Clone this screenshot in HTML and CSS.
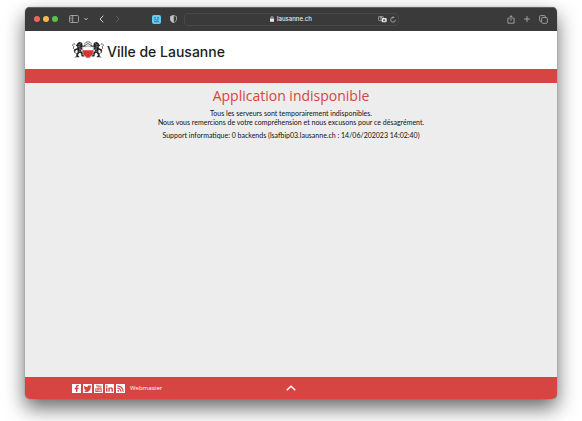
FILE: index.html
```html
<!DOCTYPE html>
<html lang="fr">
<head>
<meta charset="utf-8">
<meta name="viewport" content="width=device-width, initial-scale=1">
<title>Ville de Lausanne</title>
<link rel="stylesheet" href="styles.css">
</head>
<body>
<div class="window">
  <div class="toolbar">
    <div class="tools tools-left">
      <div class="lights"><span class="light red"></span><span class="light amber"></span><span class="light green"></span></div>
      <div class="group sidebar-group">
        <button class="tool" aria-label="Barre latérale"><svg width="10" height="8" viewBox="0 0 10 8"><rect x=".5" y=".5" width="9" height="7" rx="1.2"/><path d="M3.7.5v7M1.500 2.200h1M1.500 3.600h1M1.500 5h1"/></svg></button>
        <button class="tool" aria-label="Groupes d'onglets"><svg width="4" height="4" viewBox="0 0 4 4"><path class="strong" d="M.5 1.200 2 2.800l1.500-1.600"/></svg></button>
      </div>
      <div class="group history-group">
        <button class="tool" aria-label="Précédent"><svg width="5" height="8" viewBox="0 0 5 8"><path class="strong" d="M4.300.7 1 4l3.300 3.300"/></svg></button>
        <button class="tool dim" aria-label="Suivant"><svg width="5" height="8" viewBox="0 0 5 8"><path d="M.7.7 4 4 .7 7.300"/></svg></button>
      </div>
      <div class="group extension-group">
        <button class="tool" aria-label="Extension"><svg width="9" height="9" viewBox="0 0 9 9"><rect class="ext" width="9" height="9" rx="2"/><path class="ext-line" d="M2 2.800h2M5 2.800h2M2 6.700h5M2.200 5.200l1.500-.8 1.400.8 1.700-1.200"/></svg></button>
        <button class="tool" aria-label="Confidentialité"><svg width="7" height="8" viewBox="0 0 7 8"><path d="M3.500.5 6.500 1.500v2.700C6.500 5.800 5.200 7 3.500 7.600 1.800 7 .5 5.800.5 4.200V1.500z"/><path class="solid" d="M3.500.5v7.100C1.800 7 .5 5.800.5 4.200V1.500z"/></svg></button>
      </div>
    </div>
    <div class="address">
      <span class="host"><svg width="4" height="6" viewBox="0 0 4 6"><rect class="white" y="2.500" width="4" height="3.300" rx=".5"/><path class="white-line" d="M.9 2.700V1.700a1.100 1.100 0 0 1 2.200 0v1"/></svg>lausanne.ch</span>
      <span class="address-tools">
        <button class="tool" aria-label="Traduire"><svg width="9" height="7" viewBox="0 0 9 7"><rect x=".4" y=".4" width="5" height="4.200" rx="1"/><path d="M1.600 1.700h2.600M2.900 1v.7M2 3.400l1.700-1.600"/><rect class="white" x="3.700" y="2" width="5" height="4.300" rx="1"/><path class="cut" d="m5.200 5.300 1-2.300 1 2.300M5.500 4.600h1.400"/></svg></button>
        <button class="tool" aria-label="Recharger"><svg width="6" height="7" viewBox="0 0 6 7"><path d="M5.400 3.800A2.400 2.400 0 1 1 3 1.400h.8M2.800.3l1.100 1.100-1.100 1.100"/></svg></button>
      </span>
    </div>
    <div class="tools tools-right">
      <button class="tool" aria-label="Partager"><svg width="8" height="9" viewBox="0 0 8 9"><path d="M2.700 3.200H.9v5h6.200v-5H5.300M4 5.700V.7M2.500 2.200 4 .7l1.500 1.500"/></svg></button>
      <button class="tool" aria-label="Nouvel onglet"><svg width="8" height="8" viewBox="0 0 8 8"><path d="M4 1v6M1 4h6"/></svg></button>
      <button class="tool" aria-label="Onglets"><svg width="9" height="9" viewBox="0 0 9 9"><path d="M2.500 6.300h-1a.9.9 0 0 1-.9-.9V1.500a.9.9 0 0 1 .9-.9h3.900a.9.9 0 0 1 .9.9v1"/><rect x="2.600" y="2.600" width="5.700" height="5.700" rx=".9"/></svg></button>
    </div>
  </div>
  <header class="masthead">
    <a class="brand" href="#">
      <svg class="arms" width="32" height="18" viewBox="0 0 32 18" aria-hidden="true">
        <defs>
          <g id="lion">
            <path class="ink" d="M5.500 2.200 7 1l2.200.2 1.300 1.400-.3 1.600 1.600.5 1.300-1 .5 1-1.700 1.300-2.100-.1.200 2.200-1.100 2 1.900 1.300-.2 2.200 1.500 1.100v.8H9.600l-.5-3-1.600-.8-1.400 1.900.2 1.300 1 .6v.7H4.200l.1-2.700 1.400-2.600-.3-2.100-2 .7-.8 1.500-1-.8 1-1.900 2.600-1.200.1-1.700-1.500-.7z"/>
            <path class="tail" d="M5 12.500 2.500 11.500l1-2.200L1.300 7.500l.5-2L.4 4l1.400-1.400 1.500.8M2.700 16.600l1.800-1.200"/>
            <path class="mane" d="M6.500 3.300l1.700.9M6.300 5.500l2 .6M7 8l2 .2M6.800 10.200l1.700.2M8.200 2.200h1"/>
          </g>
        </defs>
        <use href="#lion"/>
        <use href="#lion" transform="translate(32 0) scale(-1 1)"/>
        <path class="crest" d="M12 3.300Q16-1.800 20 3.300M13.200 4Q16 1.200 18.800 4"/>
        <path class="shield" d="M10.700 5.200q2.800 1 5.300-.3Q18.500 6.200 21.300 5.200v5.600q0 4.400-5.300 6.200-5.300-1.800-5.300-6.200z"/>
        <path class="gules" d="M11 9.200h10v1.600q0 4.100-5 5.900-5-1.800-5-5.900z"/>
      </svg>
      <span class="brand-name">Ville de Lausanne</span>
    </a>
  </header>
  <div class="band"></div>
  <main class="content">
    <h1>Application indisponible</h1>
    <p>Tous les serveurs sont temporairement indisponibles.<br>Nous vous remercions de votre compréhension et nous excusons pour ce désagrément.</p>
    <p>Support informatique: 0 backends (lsafbip03.lausanne.ch : 14/06/202023 14:02:40)</p>
  </main>
  <footer class="footer">
    <nav class="social">
      <a href="#" aria-label="Facebook"><svg viewBox="0 0 10 10"><path d="M4.300 9V5.800H3V4.300h1.300V3.200C4.300 1.800 5 1.100 6.300 1.100h1.200v1.500h-.8c-.6 0-.8.2-.8.7v1h1.500l-.2 1.500H5.900V9z"/></svg></a>
      <a href="#" aria-label="Twitter"><svg viewBox="0 0 10 10"><path d="M.8 7.800c1 .1 1.900-.2 2.600-.8-.8 0-1.400-.5-1.700-1.200h.8C1.600 5.500 1 4.800 1 3.900l.8.200C1 3.500.8 2.500 1.300 1.700c.9 1.100 2.200 1.800 3.700 1.900C4.700 2.400 5.600 1.300 6.800 1.300c.5 0 1 .2 1.300.6l1.200-.5-.8 1.100 1-.3-.9 1c.1 3-2.100 5.600-5.100 5.600-1 0-1.900-.4-2.700-1z"/></svg></a>
      <a href="#" aria-label="YouTube"><svg viewBox="0 0 10 10"><path d="M1.500 4.700h7v4.200h-7z"/><path class="red-line" d="M2.500.8l.8 1.500.8-1.500M3.300 2.300v1.500M4.700 2h1v1.600h-1zM6.700 1.700v2h1.200v-2"/><path class="white-line" d="M2.200 5.700h1.600M3 5.700v2.300M4.300 6.200v1.600h.9V6.200M6.200 5.500V8h1.200V6.400H6.200"/></svg></a>
      <a href="#" aria-label="LinkedIn"><svg viewBox="0 0 10 10"><path d="M1.200 3.800h1.600v4.700H1.200zM1.200 1.500h1.600V3H1.200zM3.800 3.800h1.500v.7c.9-1.400 3.500-1 3.500 1.200v2.800H7.200V6.100c0-1.500-1.900-1.300-1.900 0v2.400H3.800z"/></svg></a>
      <a href="#" aria-label="RSS"><svg viewBox="0 0 10 10"><circle cx="2.500" cy="7.600" r="1"/><path class="rss" d="M1.500 4.500a4 4 0 0 1 4 4M1.500 2a6.500 6.500 0 0 1 6.500 6.500"/></svg></a>
    </nav>
    <a class="webmaster" href="#">Webmaster</a>
    <a class="to-top" href="#" aria-label="Haut de page"><svg width="10" height="6" viewBox="0 0 10 6"><path d="M.7 5.200 5 1.200l4.300 4"/></svg></a>
  </footer>
</div>
</body>
</html>
```
FILE: styles.css
```css
* { box-sizing: border-box; }
body {
  margin: 0;
  min-height: 100vh;
  padding: 7px 25px 22px;
  display: flex;
  background: #fff;
  font-family: "Open Sans", sans-serif;
  color: #111;
  overflow: hidden;
}
svg { display: block; }
a { color: inherit; text-decoration: none; }
.window {
  flex: 1;
  display: flex;
  flex-direction: column;
  border-radius: 5px;
  overflow: hidden;
  background: #ededed;
  box-shadow: 0 0 1px rgba(0, 0, 0, .6), 0 9px 20px rgba(0, 0, 0, .6);
}
.toolbar {
  height: 24px;
  display: grid;
  grid-template-columns: 1fr 215px 1fr;
  align-items: center;
  background: #393a39;
  box-shadow: inset 0 1px #626564;
}
.tools, .group, .lights { display: flex; align-items: center; }
.tools-left { padding-left: 9px; }
.tools-right { justify-content: flex-end; gap: 8px; padding-right: 9px; }
.lights { gap: 3px; }
.light { width: 6px; height: 6px; border-radius: 50%; }
.red { background: #f0655a; }
.amber { background: #f3bb4c; }
.green { background: #55c24b; }
.sidebar-group { margin-left: 11px; gap: 5px; }
.history-group { margin-left: 11px; gap: 11px; }
.extension-group { margin-left: 32px; gap: 9px; }
.tool { padding: 0; border: 0; background: none; }
.tool svg { fill: none; stroke: #b4b5b4; stroke-width: .8; }
.tool .strong { stroke: #d0d1d0; stroke-width: 1; }
.dim svg { stroke: #656665; }
.tool .ext { fill: #63cdf2; stroke: none; }
.tool .ext-line { stroke: #23617b; }
.tool .solid { fill: #c4c5c4; }
.tool .white, .host .white { fill: #e5e5e5; stroke: none; }
.tool .cut { stroke: #393a39; stroke-width: .6; }
.host .white-line { fill: none; stroke: #e5e5e5; stroke-width: .7; }
.address {
  height: 13px;
  display: grid;
  grid-template-columns: 1fr auto 1fr;
  align-items: center;
  border: 1px solid #484948;
  border-radius: 4px;
}
.host {
  grid-column: 2;
  display: flex;
  align-items: center;
  gap: 3px;
  font: 500 6px/8px Inter, sans-serif;
  color: #ededed;
}
.address-tools { justify-self: end; display: flex; align-items: center; gap: 3px; padding-right: 2px; }
.masthead { height: 38px; padding: 10px 47px 0; background: #fff; }
.brand { display: inline-flex; align-items: flex-start; gap: 3px; }
.brand-name { font: 500 14px/22px Inter, sans-serif; color: #1d1d1d; }
.arms .ink { fill: #252525; }
.arms .tail, .arms .crest { fill: none; stroke: #454545; stroke-width: .8; }
.arms .mane { fill: none; stroke: #ddd; stroke-width: .5; }
.arms .shield { fill: #fff; stroke: #555; stroke-width: .6; }
.arms .gules { fill: #df2f31; }
.band { height: 14px; background: #d64541; }
.content { flex: 1; padding: 4px 16px 0; text-align: center; }
h1 { margin: 0 0 4px; font-size: 14px; line-height: 18px; font-weight: 400; color: #d64541; }
p { margin: 0 0 4px; font: 7px/9px Lato, sans-serif; }
.footer {
  position: relative;
  height: 22px;
  display: flex;
  align-items: center;
  gap: 5px;
  padding: 0 47px;
  background: #d64541;
  color: #fff;
}
.social { display: flex; gap: 2px; }
.social a { width: 9px; height: 9px; background: #fff; }
.social svg { width: 9px; height: 9px; fill: #d64541; }
.social .red-line { fill: none; stroke: #d64541; stroke-width: .8; }
.social .white-line { fill: none; stroke: #fff; stroke-width: .6; }
.social .rss { fill: none; stroke: #d64541; stroke-width: 1.3; }
.webmaster { font-size: 6px; line-height: 8px; }
.to-top { position: absolute; left: 50%; transform: translateX(-50%); }
.to-top svg { fill: none; stroke: #fff; stroke-width: 1.4; }
```
